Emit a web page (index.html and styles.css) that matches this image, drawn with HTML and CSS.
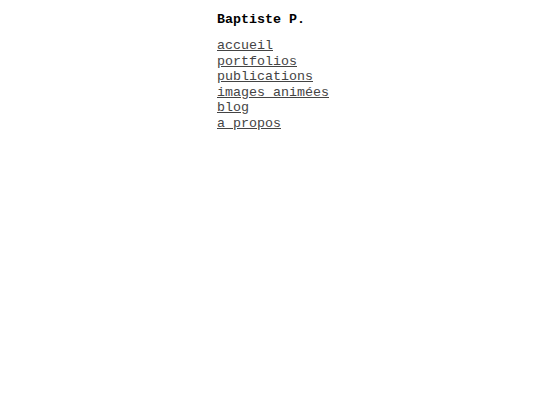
FILE: index.html
```html
<!DOCTYPE html>
<html>
<head>
<meta charset="utf-8">
<link rel="stylesheet" href="styles.css">
</head>
<body>
<div class="page">
  <h1 class="title">Baptiste P.</h1>
  <nav class="menu">
    <a href="#">accueil</a>
    <a href="#">portfolios</a>
    <a href="#">publications</a>
    <a href="#">images animées</a>
    <a href="#">blog</a>
    <a href="#">a propos</a>
  </nav>
</div>
</body>
</html>
```
FILE: styles.css
```css
body {
  margin: 0;
  background: #fff;
  font-family: "Liberation Mono", "Courier New", monospace;
  font-size: 13.33px;
}
.page {
  padding: 11px 0 0 217px;
}
.title {
  margin: 0 0 9px 0;
  font-size: 13.33px;
  font-weight: bold;
  line-height: 18px;
  color: #000;
}
.menu {
  display: flex;
  flex-direction: column;
  align-items: flex-start;
}
.menu a {
  color: #444;
  text-decoration: underline;
  line-height: 15.6px;
}
```
